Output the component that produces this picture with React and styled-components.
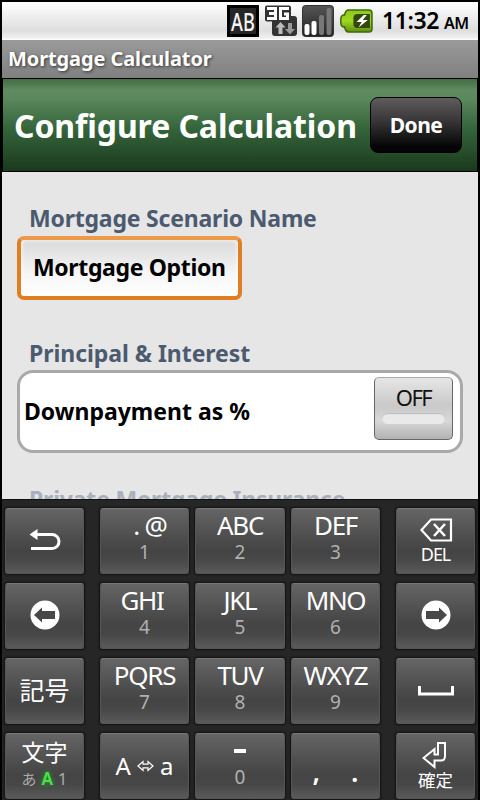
import React from 'react';
import styled, { createGlobalStyle } from 'styled-components';

const GlobalStyle = createGlobalStyle`
  * {
    box-sizing: border-box;
  }

  body {
    margin: 0;
    background: #000;
    font-family: 'Noto Sans', 'Noto Sans CJK JP', sans-serif;
  }
`;

const Screen = styled.div`
  display: flex;
  flex-direction: column;
  width: 480px;
  height: 800px;
  padding: 2px 2px 0;
  background: #000;
  overflow: hidden;
`;

const StatusBar = styled.div`
  display: flex;
  align-items: center;
  height: 38px;
  flex: none;
  padding: 0 9px 0 225px;
  background: linear-gradient(#fff 0%, #f4f4f4 25%, #dedede 75%, #f0f0f0 95%, #fff 100%);
`;

const StatusIcon = styled.svg`
  flex: none;
  margin-right: ${({ $gap }) => $gap}px;
`;

const InputBadge = styled.div`
  display: flex;
  align-items: center;
  justify-content: center;
  flex: none;
  width: 32px;
  height: 32px;
  margin-right: 6px;
  border: 3px solid #000;
  background: #262626;
  color: #f4f4f4;
  font-size: 26px;
  font-weight: 500;
  line-height: 26px;
`;

const BadgeText = styled.span`
  transform: scaleX(0.7);
`;

const Clock = styled.div`
  display: flex;
  align-items: baseline;
  color: #000;
  font-size: 23px;
  font-weight: 600;
  line-height: 38px;
  letter-spacing: -0.4px;
  white-space: nowrap;
`;

const Meridiem = styled.span`
  margin-left: 5px;
  font-size: 16px;
  letter-spacing: -0.5px;
`;

const TitleBar = styled.div`
  flex: none;
  height: 38px;
  padding-left: 6px;
  background: linear-gradient(#9a9a9a, #808080);
  color: #fff;
  font-size: 20px;
  font-weight: 700;
  line-height: 37px;
  letter-spacing: -0.1px;
  text-shadow: 1px 1px 3px #333;
`;

const Header = styled.header`
  display: flex;
  align-items: center;
  justify-content: space-between;
  flex: none;
  height: 94px;
  padding: 0 15px 0 11px;
  border: 1px solid #000;
  background: linear-gradient(#426b43 0%, #5e8c60 12%, #5a875b 22%, #34633a 55%, #1b3a1d 100%);
`;

const Heading = styled.h1`
  margin: 2px 0 0;
  color: #fff;
  font-size: 32px;
  font-weight: 700;
  line-height: 44px;
  letter-spacing: -0.1px;
  white-space: nowrap;
`;

const DoneButton = styled.button`
  flex: none;
  width: 92px;
  height: 56px;
  padding: 0;
  border: 1px solid #000;
  border-radius: 8px;
  background: linear-gradient(#5e5c5d, #353334 45%, #050505 90%);
  color: #fff;
  font-family: inherit;
  font-size: 21px;
  font-weight: 700;
  letter-spacing: -0.5px;
`;

const Content = styled.main`
  flex: none;
  height: 327px;
  padding: 30px 15px 0;
  background: #e6e6e6;
  overflow: hidden;
`;

const SectionLabel = styled.h2`
  margin: 0 0 0 12px;
  color: ${({ $faded }) => ($faded ? '#a9b0bb' : '#4c5a70')};
  font-size: 23px;
  font-weight: 700;
  line-height: 32px;
  letter-spacing: ${({ $spacing = -0.2 }) => $spacing}px;
  white-space: nowrap;
`;

const NameField = styled.div`
  width: 225px;
  height: 64px;
  margin: 2px 0 37px;
  padding-left: 12px;
  border: 4px solid #e07f22;
  border-top-color: #ec9a48;
  border-radius: 7px;
  background: linear-gradient(#d9d9d9, #f6f6f6 60%, #fff);
  box-shadow: inset 0 0 5px #fff;
  color: #000;
  font-size: 23px;
  font-weight: 700;
  line-height: 55px;
  letter-spacing: -0.35px;
  white-space: nowrap;
`;

const OptionRow = styled.div`
  display: flex;
  justify-content: space-between;
  width: 446px;
  height: 83px;
  margin: 1px 0 30px;
  padding: 4px 7px 0 4px;
  border: 3px solid #a9a9a9;
  border-radius: 16px;
  background: #fff;
`;

const OptionLabel = styled.span`
  color: #000;
  font-size: 23px;
  font-weight: 700;
  line-height: 68px;
`;

const Toggle = styled.button`
  display: flex;
  flex-direction: column;
  align-items: center;
  width: 79px;
  height: 63px;
  padding: 5px 0 0;
  border: 1px solid #666;
  border-top-color: #aaa;
  border-radius: 5px;
  background: linear-gradient(#e6e6e6, #c9c9c9 45%, #d8d8d8 70%, #b2b2b2);
  color: #111;
  font-family: inherit;
  font-size: 22px;
  line-height: 29px;
  letter-spacing: -1.5px;
`;

const ToggleLight = styled.span`
  width: 63px;
  height: 11px;
  margin-top: 1px;
  border-radius: 6px;
  background: #e9e9e9;
  box-shadow: inset 0 1px 1px #bbb;
`;

const Keyboard = styled.div`
  display: grid;
  grid-template-columns: 89px 89px 90px 89px 89px;
  grid-auto-rows: 66px;
  gap: 9px 6px;
  flex: none;
  height: 301px;
  padding: 8px 3px 0;
  border-top: 1px solid #111;
  background: #262626;
`;

const Key = styled.div`
  display: flex;
  flex-direction: column;
  align-items: center;
  justify-content: ${({ $center }) => ($center ? 'center' : 'flex-start')};
  width: ${({ $side }) => ($side ? '79px' : 'auto')};
  justify-self: ${({ $side }) => ($side === 'right' ? 'end' : $side === 'left' ? 'start' : 'stretch')};
  padding-bottom: ${({ $lift = 0 }) => $lift}px;
  border: 1px solid #555;
  border-top-color: #777;
  border-radius: 3px;
  background: linear-gradient(#656565 0%, #4d4d4d 45%, #444 65%, #484848 80%, #5a5a5a 100%);
  box-shadow: 0 0 2px 1px #111;
  color: #fff;
`;

const KeyLetters = styled.span`
  margin-top: 1px;
  padding-right: ${({ $shift = 0 }) => $shift}px;
  font-size: 26px;
  line-height: 30px;
  letter-spacing: -1.3px;
  white-space: pre;
`;

const KeyDigit = styled.span`
  color: #b0b0b0;
  font-size: 19px;
  line-height: 25px;
`;

const Dash = styled.span`
  width: 12px;
  height: 4px;
  margin: 15px 0 12px;
  background: #fff;
`;

const KanjiText = styled.span`
  font-family: 'Noto Sans CJK JP', sans-serif;
  font-size: ${({ $size }) => $size}px;
  line-height: ${({ $line }) => $line}px;
`;

const DelText = styled.span`
  font-size: 18px;
  line-height: 22px;
  letter-spacing: -1.1px;
`;

const ModeRow = styled.span`
  display: flex;
  gap: 5px;
  color: #aaa;
  font-size: 17px;
  line-height: 22px;
`;

const ActiveMode = styled.span`
  color: #4be34b;
  font-weight: 600;
  text-shadow: 0 0 5px #1fae1f;
`;

const CaseRow = styled.span`
  display: flex;
  align-items: center;
  gap: 6px;
  font-size: 24px;
  line-height: 34px;
`;

const Punctuation = styled.span`
  display: flex;
  gap: 31px;
  margin-top: 21px;
  font-size: 27px;
  font-weight: 600;
  line-height: 34px;
`;

const letterKey = (letters, digit, shift) => (
  <Key>
    <KeyLetters $shift={shift}>{letters}</KeyLetters>
    <KeyDigit>{digit}</KeyDigit>
  </Key>
);

const CircleArrow = ({ flip }) => (
  <svg width="30" height="30" viewBox="0 0 30 30" transform={flip ? 'scale(-1 1)' : undefined}>
    <circle cx="15" cy="15" r="14.5" fill="#fff" />
    <path d="M4 15 12 7.5V11H25V19H12V22.5Z" fill="#484848" />
  </svg>
);

const NetworkIcon = () => (
  <StatusIcon $gap={5} width="32" height="32" viewBox="0 0 32 32">
    <rect x="0" y="0.500" width="26" height="16" rx="2" fill="#333" />
    <rect x="7" y="11" width="25" height="20" rx="3" fill="#333" />
    <path d="M2 3.500H10.500V13.500H2M4 8.500H10.500" fill="none" stroke="#fff" strokeWidth="3" />
    <path d="M24 3.500H15.500V13.500H22.500V9H19" fill="none" stroke="#fff" strokeWidth="3" />
    <path d="M15.500 17 20.500 22.500H17.500V29H13.500V22.500H10.500Z" fill="#bbb" />
    <path d="M25 29.500 30 24H27V18H23V24H20Z" fill="#999" />
  </StatusIcon>
);

const SignalIcon = () => (
  <StatusIcon $gap={6} width="32" height="32" viewBox="0 0 32 32">
    <defs>
      <linearGradient id="signal" x1="0" y1="0" x2="0" y2="1">
        <stop offset="0" stopColor="#555" />
        <stop offset="1" stopColor="#222" />
      </linearGradient>
    </defs>
    <rect x="0.500" y="0.500" width="31" height="31" rx="3" fill="url(#signal)" stroke="#333" />
    <rect x="2.500" y="19" width="5" height="11" rx="2" fill="#fff" />
    <rect x="9.500" y="16" width="5" height="14" rx="2" fill="#fff" />
    <rect x="17" y="10" width="5" height="20" rx="2" fill="#777" />
    <rect x="24.500" y="3" width="5" height="27" rx="2" fill="#777" />
  </StatusIcon>
);

const BatteryIcon = () => (
  <StatusIcon $gap={9} width="33" height="24" viewBox="0 0 32 24" preserveAspectRatio="none">
    <defs>
      <linearGradient id="battery" x1="0" y1="0" x2="0" y2="1">
        <stop offset="0" stopColor="#8cc71c" />
        <stop offset="0.5" stopColor="#a0d820" />
        <stop offset="1" stopColor="#5c8f10" />
      </linearGradient>
    </defs>
    <path
      d="M8 1H28Q31 1 31 4V20Q31 23 28 23H8Q6 23 5 20L4.500 18H3Q0.800 17 0.800 14.500V9.500Q0.800 7 3 6H4.500L5 4Q6 1 8 1Z"
      fill="url(#battery)"
      stroke="#40680c"
      strokeWidth="1.500"
    />
    <path d="M17 5H29V19H17Q13 19 13 15V9Q13 5 17 5Z" fill="#33470f" />
    <path d="M23 6 16 13H21L18 18.500 27 11H22L26 6Z" fill="#fff" />
  </StatusIcon>
);

const App = () => (
  <>
    <GlobalStyle />
    <Screen>
      <StatusBar>
        <InputBadge>
          <BadgeText>AB</BadgeText>
        </InputBadge>
        <NetworkIcon />
        <SignalIcon />
        <BatteryIcon />
        <Clock>
          11:32
          <Meridiem>AM</Meridiem>
        </Clock>
      </StatusBar>
      <TitleBar>Mortgage Calculator</TitleBar>
      <Header>
        <Heading>Configure Calculation</Heading>
        <DoneButton>Done</DoneButton>
      </Header>
      <Content>
        <SectionLabel>Mortgage Scenario Name</SectionLabel>
        <NameField>Mortgage Option</NameField>
        <SectionLabel $spacing={-0.05}>Principal &amp; Interest</SectionLabel>
        <OptionRow>
          <OptionLabel>Downpayment as %</OptionLabel>
          <Toggle>
            OFF
            <ToggleLight />
          </Toggle>
        </OptionRow>
        <SectionLabel $faded>Private Mortgage Insurance</SectionLabel>
      </Content>
      <Keyboard>
        <Key $side="left" $center $lift={2}>
          <svg width="32" height="24" viewBox="0 0 32 24">
            <path d="M8 6.500H23A6.500 6.500 0 0 1 23 20.500H2" fill="none" stroke="#fff" strokeWidth="3" />
            <path d="M0.500 6.500 8.500 1V12Z" fill="#fff" />
          </svg>
        </Key>
        {letterKey('  . @', 1)}
        {letterKey('ABC', 2)}
        {letterKey('DEF', 3)}
        <Key $side="right" $center>
          <svg width="34" height="26" viewBox="0 0 34 26">
            <path d="M2.500 13 12 2.500H32V23.500H12Z" fill="none" stroke="#fff" strokeWidth="2.200" />
            <path d="M15 7 26 19M26 7 15 19" stroke="#fff" strokeWidth="2.500" />
          </svg>
          <DelText>DEL</DelText>
        </Key>

        <Key $side="left" $center $lift={2}>
          <CircleArrow />
        </Key>
        {letterKey('GHI', 4, 5)}
        {letterKey('JKL', 5)}
        {letterKey('MNO', 6)}
        <Key $side="right" $center $lift={2}>
          <CircleArrow flip />
        </Key>

        <Key $side="left" $center $lift={5}>
          <KanjiText $size={25} $line={36}>記号</KanjiText>
        </Key>
        {letterKey('PQRS', 7)}
        {letterKey('TUV', 8)}
        {letterKey('WXYZ', 9)}
        <Key $side="right" $center $lift={1}>
          <svg width="36" height="10" viewBox="0 0 36 10">
            <path d="M1.500 0V8H34.500V0" fill="none" stroke="#fff" strokeWidth="3" />
          </svg>
        </Key>

        <Key $side="left">
          <KanjiText $size={23} $line={34}>文字</KanjiText>
          <ModeRow>
            <KanjiText $size={15} $line={21}>あ</KanjiText>
            <ActiveMode>A</ActiveMode>
            <span>1</span>
          </ModeRow>
        </Key>
        <Key $center>
          <CaseRow>
            A
            <svg width="17" height="12" viewBox="0 0 17 12">
              <path
                d="M1 6 6 1.500V4.200H11V1.500L16 6 11 10.500V7.800H6V10.500Z"
                fill="none"
                stroke="#fff"
                strokeWidth="1.200"
              />
            </svg>
            a
          </CaseRow>
        </Key>
        <Key>
          <Dash />
          <KeyDigit>0</KeyDigit>
        </Key>
        <Key>
          <Punctuation>
            <span>,</span>
            <span>.</span>
          </Punctuation>
        </Key>
        <Key $side="right" $center>
          <svg width="28" height="28" viewBox="0 0 28 28">
            <path
              d="M16 2H23V15Q23 19.500 19 19.500H12.500V26L1.500 17 12.500 8V13.500H16Z"
              fill="none"
              stroke="#fff"
              strokeWidth="2"
            />
          </svg>
          <KanjiText $size={17.5} $line={22}>確定</KanjiText>
        </Key>
      </Keyboard>
    </Screen>
  </>
);

export default App;
